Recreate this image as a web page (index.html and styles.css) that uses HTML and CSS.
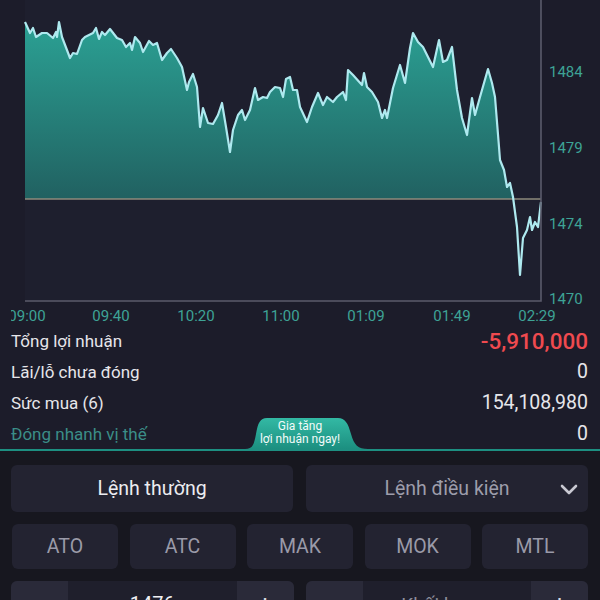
FILE: index.html
```html
<!DOCTYPE html>
<html lang="vi">
<head>
    <meta charset="UTF-8">
    <meta name="viewport" content="width=device-width, initial-scale=1.0">
    <title>Giao dịch phái sinh</title>
    <link rel="stylesheet" href="styles.css">
</head>
<body>
    <div class="chart">
        <svg width="600" height="325" viewBox="0 0 600 325">
            <defs>
                <linearGradient id="area" x1="0" y1="0" x2="0" y2="1">
                    <stop offset="0" stop-color="#2ba194"/>
                    <stop offset="0.5" stop-color="#236f6c"/>
                    <stop offset="1" stop-color="#1b3942"/>
                </linearGradient>
                <clipPath id="above">
                    <rect x="25" y="0" width="516" height="199"/>
                </clipPath>
                <clipPath id="labels">
                    <rect x="11" y="300" width="589" height="25"/>
                </clipPath>
            </defs>
            <rect class="plot-bg" x="25" y="0" width="516" height="301"/>
            <path id="price-area" fill="url(#area)" clip-path="url(#above)"/>
            <line class="ref-line" x1="25" y1="199" x2="541" y2="199"/>
            <polyline id="price-line" class="price-line"/>
            <path class="frame" d="M541 0 V301 H25"/>
            <g class="y-labels">
                <text x="549" y="77">1484</text>
                <text x="549" y="153">1479</text>
                <text x="549" y="229">1474</text>
                <text x="549" y="304">1470</text>
            </g>
            <g class="x-labels" clip-path="url(#labels)">
                <text x="27" y="321">09:00</text>
                <text x="111" y="321">09:40</text>
                <text x="196" y="321">10:20</text>
                <text x="281" y="321">11:00</text>
                <text x="366" y="321">01:09</text>
                <text x="452" y="321">01:49</text>
                <text x="537" y="321">02:29</text>
            </g>
        </svg>
    </div>

    <section class="stats">
        <div class="stat-row">
            <span>Tổng lợi nhuận</span>
            <span class="value loss">-5,910,000</span>
        </div>
        <div class="stat-row">
            <span>Lãi/lỗ chưa đóng</span>
            <span class="value">0</span>
        </div>
        <div class="stat-row">
            <span>Sức mua (6)</span>
            <span class="value">154,108,980</span>
        </div>
        <div class="stat-row">
            <span class="quick">Đóng nhanh vị thế</span>
            <span class="value">0</span>
        </div>
        <div class="promo">
            <svg class="promo-shape" width="123" height="32" viewBox="0 0 123 32">
                <defs>
                    <linearGradient id="promo" x1="0" y1="0" x2="0" y2="1">
                        <stop offset="0" stop-color="#33b9a4"/>
                        <stop offset="1" stop-color="#1c8f80"/>
                    </linearGradient>
                </defs>
                <path d="M0 32 C8 32 9 27 11 17 C13 6 15 1 22 1 H93 C100 1 103 6 106 17 C109 28 113 32 123 32 Z" fill="url(#promo)"/>
            </svg>
            <span class="promo-text">Gia tăng<br>lợi nhuận ngay!</span>
        </div>
    </section>

    <section class="panel">
        <div class="order-tabs">
            <button class="tab active">Lệnh thường</button>
            <button class="tab">Lệnh điều kiện
                <svg class="chevron" width="18" height="12" viewBox="0 0 18 12">
                    <path d="M2 3 L9 10 L16 3" fill="none" stroke="#c9c9d2" stroke-width="2.6" stroke-linecap="round" stroke-linejoin="round"/>
                </svg>
            </button>
        </div>
        <div class="order-types">
            <button class="type">ATO</button>
            <button class="type">ATC</button>
            <button class="type">MAK</button>
            <button class="type">MOK</button>
            <button class="type">MTL</button>
        </div>
        <div class="inputs">
            <div class="stepper">
                <button class="step">−</button>
                <span class="field">1476</span>
                <button class="step">+</button>
            </div>
            <div class="stepper">
                <button class="step">−</button>
                <span class="field placeholder">Khối lượng</span>
                <button class="step">+</button>
            </div>
        </div>
    </section>

    <script>
        // Điểm giá (x, y) trên biểu đồ
        const points = [
            [25,22],[30,33],[33,28],[36,37],[42,33],[47,33],[53,38],[56,32],[57,37],[59,22],
            [62,37],[70,58],[73,53],[77,54],[82,40],[85,37],[93,33],[96,28],[99,39],[102,32],
            [105,35],[110,29],[117,38],[122,40],[126,47],[130,43],[132,50],[135,37],[140,43],[143,52],
            [149,41],[153,45],[157,43],[162,60],[167,53],[171,49],[177,58],[182,67],[187,90],[189,82],
            [193,74],[197,87],[200,127],[203,108],[208,123],[213,124],[218,115],[222,103],[226,127],[230,152],
            [233,130],[238,115],[242,110],[245,120],[250,110],[255,88],[258,100],[263,97],[267,98],[270,92],
            [275,87],[280,88],[283,97],[286,79],[290,77],[293,90],[297,90],[300,107],[307,122],[312,107],
            [318,93],[323,105],[327,97],[333,102],[337,97],[343,92],[346,100],[348,70],[353,75],[362,85],
            [364,73],[367,87],[372,92],[378,102],[382,118],[385,110],[387,118],[393,88],[400,65],[405,83],
            [410,48],[413,33],[418,42],[423,47],[428,57],[433,67],[439,40],[443,62],[447,60],[452,47],
            [457,90],[462,118],[467,135],[472,98],[475,115],[480,97],[488,69],[492,83],[495,97],[499,147],
            [500,160],[504,170],[507,187],[510,183],[513,197],[517,227],[520,275],[523,238],[527,230],[530,217],
            [532,230],[535,222],[538,227],[541,202]
        ];
        const line = points.map(p => p.join(',')).join(' ');
        document.getElementById('price-line').setAttribute('points', line);
        document.getElementById('price-area').setAttribute('d',
            'M' + points.map(p => p.join(' ')).join(' L') + ' L541 301 L25 301 Z');
    </script>
</body>
</html>
```

FILE: styles.css
```css
body {
    margin: 0;
    padding: 0;
    background-color: #1c1c2a;
    font-family: Roboto, "Noto Sans", sans-serif;
    color: #e8e8ec;
    width: 600px;
    height: 600px;
    overflow: hidden;
}
.chart svg {
    display: block;
}
.plot-bg {
    fill: #1e1f2e;
}
.price-line {
    fill: none;
    stroke: #aee9ef;
    stroke-width: 2.2;
    stroke-linejoin: round;
}
.ref-line {
    stroke: #8e8b7d;
    stroke-width: 1.6;
}
.frame {
    fill: none;
    stroke: #5b5b6b;
    stroke-width: 1.6;
}
.y-labels text,
.x-labels text {
    font-family: Roboto, sans-serif;
    font-size: 15px;
    fill: #3ea396;
}
.x-labels text {
    text-anchor: middle;
}

/* Bảng lợi nhuận */
.stats {
    position: relative;
    padding: 0 12px 0 11px;
    border-bottom: 2px solid #1d8f81;
}
.stat-row {
    display: flex;
    justify-content: space-between;
    align-items: center;
    height: 31px;
    font-size: 17px;
    color: #e6e6ea;
}
.stat-row:last-of-type {
    height: 29px;
}
.value {
    font-size: 19.5px;
}
.value.loss {
    color: #ef4a4f;
    font-size: 22.5px;
    font-weight: 500;
}
.quick {
    color: #3b8e88;
}
.promo {
    position: absolute;
    left: 245px;
    bottom: 0;
    width: 123px;
    height: 32px;
}
.promo-shape {
    display: block;
}
.promo-text {
    position: absolute;
    left: 0;
    width: 110px;
    top: 3px;
    text-align: center;
    font-size: 12px;
    line-height: 13px;
    color: #f2fbf9;
}

/* Khu đặt lệnh */
.panel {
    background-color: #17171f;
    padding: 14px 12px 0 11px;
    display: flex;
    flex-direction: column;
    gap: 12px;
    height: 200px;
}
button {
    font-family: Roboto, sans-serif;
    border: none;
    margin: 0;
    padding: 0;
    cursor: pointer;
}
.order-tabs {
    display: flex;
    gap: 13px;
}
.tab {
    position: relative;
    flex: 1;
    height: 47px;
    border-radius: 6px;
    background-color: #232331;
    color: #9d9dab;
    font-size: 19.5px;
}
.tab.active {
    color: #ececf0;
}
.chevron {
    position: absolute;
    right: 10px;
    top: 18px;
}
.order-types {
    display: flex;
    gap: 11.5px;
    padding-left: 1px;
}
.type {
    flex: 1;
    height: 45px;
    border-radius: 6px;
    background-color: #232331;
    color: #9a9aa8;
    font-size: 19.5px;
}
.inputs {
    display: flex;
    gap: 12px;
}
.stepper {
    flex: 1;
    display: flex;
    height: 46px;
    border-radius: 6px;
    overflow: hidden;
    background-color: #1f1f2c;
}
.step {
    width: 57px;
    background-color: #2a2a39;
    color: #d8d8e0;
    font-size: 24px;
}
.field {
    flex: 1;
    display: flex;
    align-items: center;
    justify-content: center;
    font-size: 20px;
    color: #f0f0f4;
}
.field.placeholder {
    font-size: 19px;
    color: #8d8d9a;
}
```
